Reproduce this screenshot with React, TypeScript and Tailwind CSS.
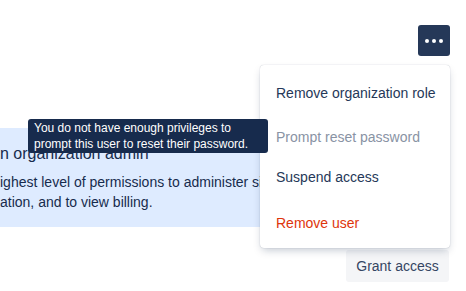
export default function App() {
  return (
    <div
      className="relative h-[291px] w-[466px] overflow-hidden bg-white text-[#172b4d]"
      style={{ fontFamily: '"Liberation Sans", Arial, sans-serif' }}
    >
      {/* More actions trigger */}
      <div className="flex justify-end pt-[25px] pr-[16px]">
        <button className="flex h-[31px] w-[32px] items-center justify-center gap-[3px] rounded-[3px] bg-[#253858]">
          <span className="h-[4px] w-[4px] rounded-full bg-white" />
          <span className="h-[4px] w-[4px] rounded-full bg-white" />
          <span className="h-[4px] w-[4px] rounded-full bg-white" />
        </button>
      </div>

      {/* Role card */}
      <div className="mt-[72px] mr-[16px] h-[99px] bg-[#deebff] pt-[15px]">
        <div className="text-[16px] leading-[22px] text-[#172b4d]">n organization admin</div>
        <div className="mt-[7px] text-[14px] leading-[20px] text-[#172b4d]">
          ighest level of permissions to administer sites and users in the
          <br />
          ation, and to view billing.
        </div>
      </div>

      {/* Footer */}
      <div className="mt-[23px] flex justify-end pr-[17px]">
        <button className="h-[32px] w-[103px] rounded-[3px] bg-[#f4f5f7] text-[14px] text-[#344563]">
          Grant access
        </button>
      </div>

      {/* Dropdown menu */}
      <div className="absolute left-[260px] top-[65px] w-[190px] rounded-[4px] bg-white pt-2 pb-[5px] text-[14px] shadow-[0_4px_8px_-2px_rgba(9,30,66,0.25),0_0_1px_rgba(9,30,66,0.31)]">
        <div className="flex h-[40px] items-center whitespace-nowrap px-4 text-[#253858]">Remove organization role</div>
        <div className="mt-1 flex h-[40px] items-center whitespace-nowrap px-4 text-[#8993a4]">Prompt reset password</div>
        <div className="flex h-[40px] items-center whitespace-nowrap px-4 text-[#253858]">Suspend access</div>
        <div className="mt-[6px] flex h-[40px] items-center whitespace-nowrap px-4 text-[#de350b]">Remove user</div>
      </div>

      {/* Tooltip */}
      <div className="absolute left-[28px] top-[119px] w-[240px] rounded-[3px] bg-[#172b4d] px-[6px] py-[1px] text-[12px] leading-[16px] text-white">
        You do not have enough privileges to prompt this user to reset their password.
      </div>
    </div>
  );
}
